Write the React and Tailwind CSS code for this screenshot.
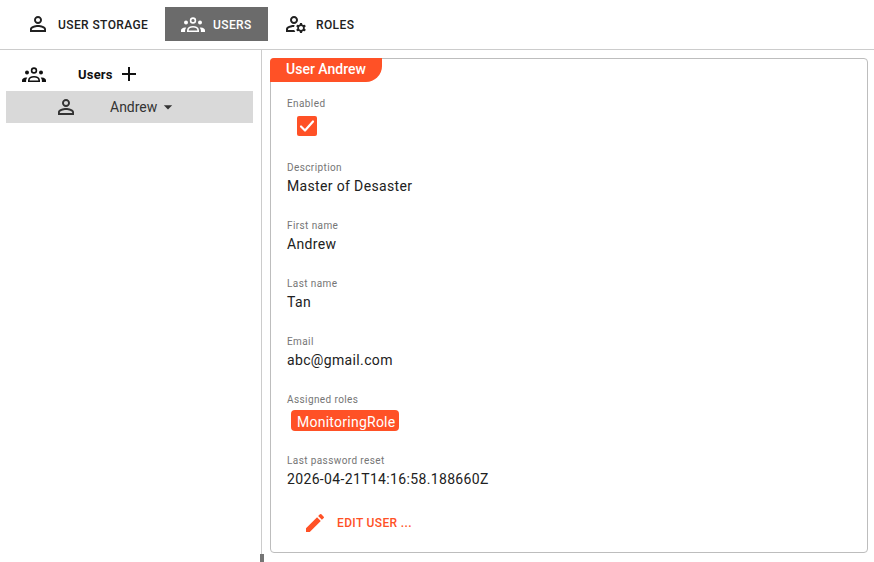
import { MdAdd, MdArrowDropDown, MdEdit, MdOutlineManageAccounts, MdPersonOutline } from "react-icons/md";

const GroupIcon = ({ className }) => (
  <svg viewBox="0 0 24 24" width="24" height="24" fill="currentColor" className={className}>
    <circle cx="12" cy="8.5" r="2.4" fill="none" stroke="currentColor" strokeWidth="1.6" />
    <circle cx="5" cy="10.6" r="2" />
    <circle cx="19" cy="10.6" r="2" />
    <path d="M6.8 19.2v-.8c0-2.2 2.3-3.7 5.2-3.7s5.2 1.5 5.2 3.7v.8z" fill="none" stroke="currentColor" strokeWidth="1.6" />
    <path d="M0 20v-1.4c0-1.6 1.7-3 4-3 .5 0 .9.1 1.3.2-.8.8-1.2 1.7-1.2 2.7V20z" />
    <path d="M24 20v-1.4c0-1.6-1.7-3-4-3-.5 0-.9.1-1.3.2.8.8 1.2 1.7 1.2 2.7V20z" />
  </svg>
);

const tabs = [
  { label: "USER STORAGE", icon: MdPersonOutline, width: "w-[149px] pl-[10px]", active: false },
  { label: "USERS", icon: GroupIcon, width: "w-[103px] pl-4", active: true },
  { label: "ROLES", icon: MdOutlineManageAccounts, width: "w-[106px] pl-4", active: false },
];

const Field = ({ label, value, className }) => (
  <div className={className}>
    <div className="text-[10px] leading-[14px] tracking-[0.4px] text-[#757575]">{label}</div>
    <div className="mt-[1px] text-sm leading-[20px] tracking-[0.35px] text-[#212121]">{value}</div>
  </div>
);

export default function App() {
  return (
    <div className="h-[562px] w-[874px] overflow-hidden bg-white font-['Roboto',sans-serif]">
      <div className="flex h-[50px] border-b border-[#cccccc] pt-[7px] pl-4">
        {tabs.map((tab) => (
          <button
            key={tab.label}
            className={`flex h-[34px] items-center gap-2 text-xs font-medium tracking-[0.4px] ${tab.width} ${
              tab.active ? "bg-[#6b6b6b] text-white" : "text-[#212121]"
            }`}
          >
            <tab.icon className="text-2xl" />
            <span className="mt-px">{tab.label}</span>
          </button>
        ))}
      </div>
      <div className="flex h-[512px]">
        <div className="relative w-[262px] border-r border-[#cccccc] pl-[6px] pt-2">
          <div className="flex h-8 w-[247px] items-center pl-4 text-[13px] font-bold tracking-[0.2px] text-[#111111]">
            <GroupIcon />
            <span className="mt-px ml-[32px]">Users</span>
            <MdAdd className="ml-[4px] text-2xl" />
          </div>
          <div className="mt-[1px] flex h-8 w-[247px] items-center bg-[#d9d9d9] pl-12 text-sm text-[#333333]">
            <MdPersonOutline className="text-2xl" />
            <span className="ml-[32px]">Andrew</span>
            <MdArrowDropDown className="ml-px text-xl" />
          </div>
          <div className="absolute -right-[3px] bottom-0 h-2 w-1 bg-[#757575]" />
        </div>
        <div className="pt-2 pl-2">
          <div className="h-[495px] w-[598px] rounded border border-[#bdbdbd]">
            <div className="-mt-px -ml-px flex h-6 w-[112px] items-center justify-center rounded-tl rounded-br-2xl bg-[#ff5126] pb-[3px] text-sm font-medium text-white">
              User Andrew
            </div>
            <div className="pl-4 pt-[15px]">
              <div className="text-[10px] leading-[14px] tracking-[0.4px] text-[#757575]">Enabled</div>
              <div className="mt-[5px] ml-[10px] flex h-5 w-5 items-center justify-center rounded-[2px] bg-[#ff5126] text-white">
                <svg viewBox="0 0 20 20" width="20" height="20" fill="none" stroke="currentColor" strokeWidth="2.2" strokeLinecap="round" strokeLinejoin="round">
                  <path d="M4 10.5 8 14.5 16 5.5" />
                </svg>
              </div>
              <Field label="Description" value="Master of Desaster" className="mt-[25px]" />
              <Field label="First name" value="Andrew" className="mt-[23px]" />
              <Field label="Last name" value="Tan" className="mt-[23px]" />
              <Field label="Email" value="abc@gmail.com" className="mt-[23px]" />
              <div className="mt-[23px] text-[10px] leading-[14px] tracking-[0.4px] text-[#757575]">Assigned roles</div>
              <div className="mt-[3px] ml-1 flex h-[21px] w-fit items-center rounded bg-[#ff5126] pt-[3px] pl-[6px] pr-[4px] text-sm tracking-[0.25px] text-white">
                MonitoringRole
              </div>
              <Field label="Last password reset" value="2026-04-21T14:16:58.188660Z" className="mt-[23px]" />
              <button className="mt-[22px] ml-[16px] flex items-center text-xs font-medium tracking-[0.35px] text-[#ff5126]">
                <MdEdit className="text-2xl" />
                <span className="ml-[10px]">EDIT USER ...</span>
              </button>
            </div>
          </div>
        </div>
      </div>
    </div>
  );
}
